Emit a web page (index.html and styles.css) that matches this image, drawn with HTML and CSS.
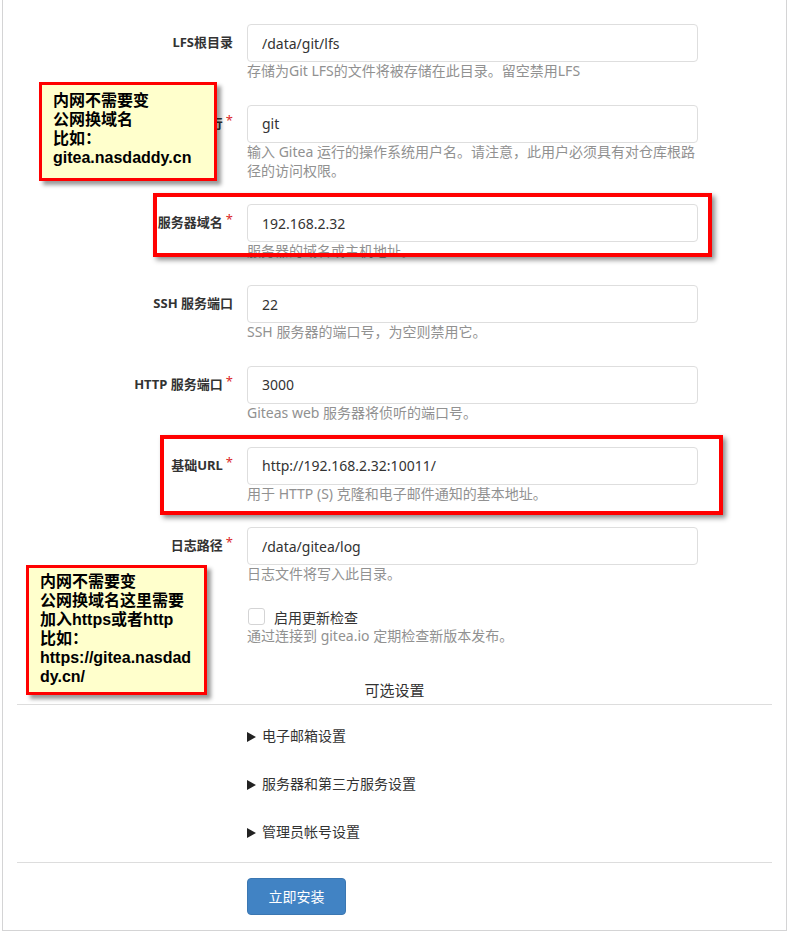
FILE: index.html
```html
<!DOCTYPE html>
<html>
<head>
    <meta charset="utf-8">
    <title>Gitea 安装</title>
    <link rel="stylesheet" href="styles.css">
</head>
<body>
    <div class="page">
        <form class="segment">
            <div class="field">
                <label>LFS根目录</label>
                <input type="text" value="/data/git/lfs">
                <div class="help">存储为Git LFS的文件将被存储在此目录。留空禁用LFS</div>
            </div>
            <div class="field required">
                <label>以用户名运行</label>
                <input type="text" value="git">
                <div class="help">输入 Gitea 运行的操作系统用户名。请注意，此用户必须具有对仓库根路径的访问权限。</div>
            </div>
            <div class="field required">
                <label>服务器域名</label>
                <input type="text" value="192.168.2.32">
                <div class="help">服务器的域名或主机地址。</div>
            </div>
            <div class="field">
                <label>SSH 服务端口</label>
                <input type="text" value="22">
                <div class="help">SSH 服务器的端口号，为空则禁用它。</div>
            </div>
            <div class="field required">
                <label>HTTP 服务端口</label>
                <input type="text" value="3000">
                <div class="help">Giteas web 服务器将侦听的端口号。</div>
            </div>
            <div class="field required">
                <label>基础URL</label>
                <input type="text" value="http://192.168.2.32:10011/">
                <div class="help">用于 HTTP (S) 克隆和电子邮件通知的基本地址。</div>
            </div>
            <div class="field required">
                <label>日志路径</label>
                <input type="text" value="/data/gitea/log">
                <div class="help">日志文件将写入此目录。</div>
            </div>
            <div class="field">
                <div class="check">
                    <input type="checkbox" id="update-check">
                    <label for="update-check">启用更新检查</label>
                </div>
                <div class="help">通过连接到 gitea.io 定期检查新版本发布。</div>
            </div>

            <h4 class="dividing">可选设置</h4>

            <div class="optional">
                <details>
                    <summary>电子邮箱设置</summary>
                </details>
                <details>
                    <summary>服务器和第三方服务设置</summary>
                </details>
                <details>
                    <summary>管理员帐号设置</summary>
                </details>
            </div>

            <div class="divider"></div>

            <div class="actions">
                <button type="button" class="button">立即安装</button>
            </div>
        </form>

        <!-- notes drawn over the screenshot -->
        <div class="mark mark-domain"></div>
        <div class="mark mark-url"></div>
        <div class="note note-domain">
            内网不需要变<br>
            公网换域名<br>
            比如：<br>
            gitea.nasdaddy.cn
        </div>
        <div class="note note-url">
            内网不需要变<br>
            公网换域名这里需要<br>
            加入https或者http<br>
            比如：<br>
            https://gitea.nasdad<br>
            dy.cn/
        </div>
    </div>
</body>
</html>
```

FILE: styles.css
```css
body {
    margin: 0;
    font-family: "Noto Sans", "Noto Sans CJK SC", sans-serif;
    font-size: 14px;
    color: #333;
    background: #fff;
}
.page { position: relative; }

/* top edge of the card is cut off in the screenshot */
.segment {
    width: 785px;
    margin-left: 2px;
    box-sizing: border-box;
    border: 1px solid #d4d4d5;
    border-top: 0;
    padding: 24px 0 15px;
}

.field {
    display: grid;
    grid-template-columns: 230px 451px;
    grid-template-rows: 38px auto;
    column-gap: 14px;
    margin-bottom: 24px;
}
.field > label {
    text-align: right;
    font-size: 13px;
    font-weight: bold;
    line-height: 36px;
    color: #333;
}
.field.required > label::after {
    content: "*";
    color: #db2828;
    margin-left: 3px;
    line-height: 0;
    vertical-align: 3px;
    font-weight: normal;
}
.field input[type=text] {
    grid-column: 2;
    height: 38px;
    box-sizing: border-box;
    border: 1px solid #dedede;
    border-radius: 4px;
    padding: 0 14px;
    font: inherit;
    color: #333;
    outline: none;
}
.help {
    grid-column: 2;
    color: #919191;
    line-height: 18.75px;
}

.field:has(.check) { grid-template-rows: 19px auto; }
.check {
    grid-column: 2;
    display: flex;
    align-items: flex-start;
    line-height: 19px;
}
.check input {
    appearance: none;
    width: 17px;
    height: 17px;
    margin: 0 9px 0 1px;
    border: 1px solid #d4d4d5;
    border-radius: 3px;
    background: #fff;
}

.dividing {
    margin: 35px 14px 0;
    padding-bottom: 4px;
    border-bottom: 1px solid #ddd;
    text-align: center;
    font-size: 15px;
    font-weight: normal;
    line-height: 19px;
}

.optional { margin-top: 7px; padding-left: 244px; }
.optional summary {
    list-style: none;
    padding: 14px 0;
    line-height: 20px;
    cursor: pointer;
}
.optional summary::-webkit-details-marker { display: none; }
.optional summary::before {
    content: "";
    display: inline-block;
    border-left: 9px solid #222;
    border-top: 5px solid transparent;
    border-bottom: 5px solid transparent;
    margin-right: 6px;
    vertical-align: -1px;
}

.divider { margin: 6px 14px 0; border-top: 1px solid #ddd; }

.actions { padding: 15px 0 0 244px; }
.button {
    width: 99px;
    height: 37px;
    background: #4183c4;
    border: 1px solid #3b77b2;
    border-radius: 4px;
    color: #fff;
    font: inherit;
    cursor: pointer;
}

/* annotations */
.note {
    position: absolute;
    box-sizing: border-box;
    background: #ffffcc;
    border: 3px solid #f00;
    box-shadow: 4px 4px 4px rgba(0, 0, 0, .4);
    font-family: "Liberation Sans", "Noto Sans CJK SC", sans-serif;
    font-weight: bold;
    font-size: 16px;
    line-height: 19px;
    color: #000;
    padding: 6px 0 0 11px;
}
.note-domain { left: 39px; top: 82px; width: 178px; height: 99px; }
.note-url { left: 26px; top: 565px; width: 181px; height: 130px; padding-top: 4px; }

.mark {
    position: absolute;
    box-sizing: border-box;
    border: 4px solid #f00;
    box-shadow: 3px 3px 5px rgba(0, 0, 0, .45);
}
.mark-domain { left: 153px; top: 193px; width: 559px; height: 64px; }
.mark-url { left: 160px; top: 435px; width: 563px; height: 80px; }
```
